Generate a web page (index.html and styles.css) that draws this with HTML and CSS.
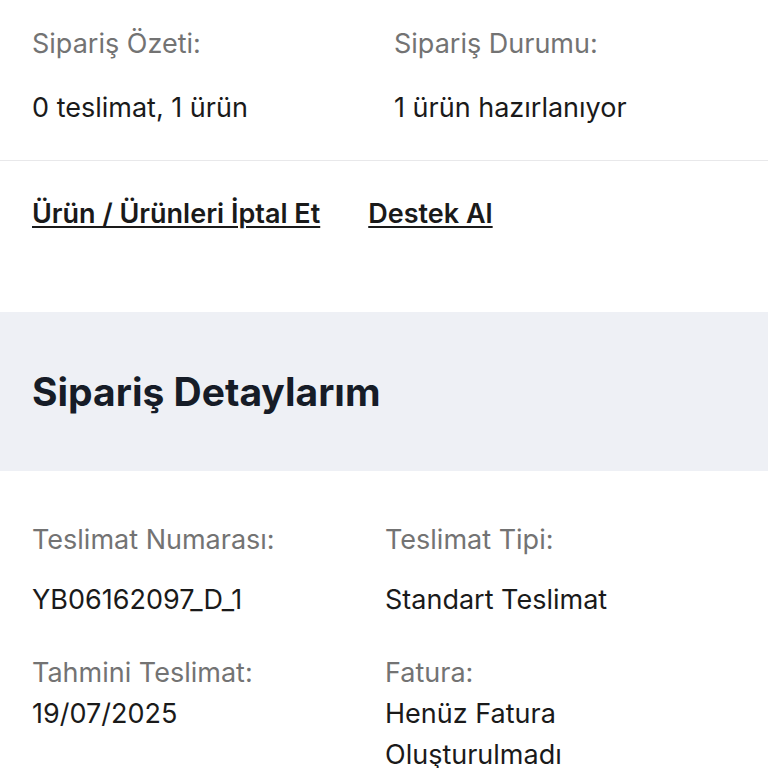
FILE: index.html
```html
<!DOCTYPE html>
<html lang="tr">
<head>
  <meta charset="UTF-8" />
  <meta name="viewport" content="width=device-width, initial-scale=1.0"/>
  <title>Sipariş Detayı</title>
  <link rel="stylesheet" href="styles.css">
</head>
<body>

  <div class="summary">
    <div class="info-grid top">
      <div class="cell">
        <div class="label">Sipariş Özeti:</div>
        <div class="value">0 teslimat, 1 ürün</div>
      </div>
      <div class="cell">
        <div class="label">Sipariş Durumu:</div>
        <div class="value">1 ürün hazırlanıyor</div>
      </div>
    </div>
  </div>

  <div class="actions">
    <a href="#">Ürün / Ürünleri İptal Et</a>
    <a href="#">Destek Al</a>
  </div>

  <div class="band">
    <h2>Sipariş Detaylarım</h2>
  </div>

  <div class="details">
    <div class="info-grid">
      <div class="cell">
        <div class="label">Teslimat Numarası:</div>
        <div class="value">YB06162097_D_1</div>
      </div>
      <div class="cell">
        <div class="label">Teslimat Tipi:</div>
        <div class="value">Standart Teslimat</div>
      </div>
      <div class="cell tight">
        <div class="label">Tahmini Teslimat:</div>
        <div class="value">19/07/2025</div>
      </div>
      <div class="cell tight">
        <div class="label">Fatura:</div>
        <div class="value">Henüz Fatura Oluşturulmadı</div>
      </div>
    </div>
  </div>

</body>
</html>
```

FILE: styles.css
```css
body {
  margin: 0;
  background: #fff;
  font-family: Inter, "Noto Sans", sans-serif;
  color: #1a1a1a;
}

.summary {
  padding: 23px 32px 32px;
  border-bottom: 1px solid #e8e8ea;
}

.info-grid {
  display: grid;
  grid-template-columns: 362px 1fr;
}

.label {
  font-size: 27px;
  line-height: 41px;
  color: #737373;
}

.value {
  font-size: 27px;
  line-height: 41px;
  color: #1a1a1a;
}

.top .value {
  margin-top: 23px;
}

.actions {
  display: flex;
  gap: 48px;
  padding: 32px 32px 78px;
}

.actions a {
  font-size: 27px;
  line-height: 41px;
  font-weight: 600;
  color: #1a1a1a;
  text-decoration: underline;
  text-underline-offset: 3px;
  text-decoration-thickness: 2px;
}

.band {
  background: #eef0f5;
  height: 159px;
  display: flex;
  align-items: center;
  padding: 0 32px;
}

.band h2 {
  margin: 0;
  font-size: 39px;
  font-weight: 700;
  color: #161c27;
}

.details {
  padding: 48px 32px 0;
}

.details .info-grid {
  grid-template-columns: 353px 300px;
  row-gap: 32px;
}

.details .cell .value {
  margin-top: 19px;
}

.details .cell.tight .value {
  margin-top: 0;
}
```
